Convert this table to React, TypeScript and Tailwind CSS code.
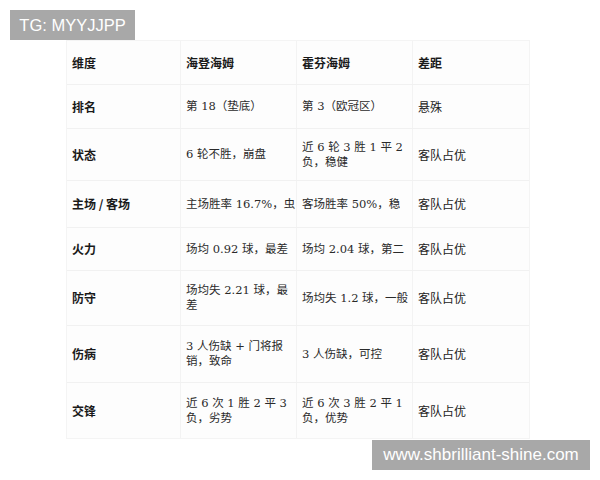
import React, { FC } from 'react';

type Row = { label: string; a: string[]; b: string[]; diff: string; h: string };

const rows: Row[] = [
    { label: '排名', a: ['第 18（垫底）'], b: ['第 3（欧冠区）'], diff: '悬殊', h: 'h-[44px]' },
    { label: '状态', a: ['6 轮不胜，崩盘'], b: ['近 6 轮 3 胜 1 平 2', '负，稳健'], diff: '客队占优', h: 'h-[52px]' },
    { label: '主场 / 客场', a: ['主场胜率 16.7%，虫'], b: ['客场胜率 50%，稳'], diff: '客队占优', h: 'h-[47px]' },
    { label: '火力', a: ['场均 0.92 球，最差'], b: ['场均 2.04 球，第二'], diff: '客队占优', h: 'h-[43px]' },
    { label: '防守', a: ['场均失 2.21 球，最', '差'], b: ['场均失 1.2 球，一般'], diff: '客队占优', h: 'h-[55px]' },
    { label: '伤病', a: ['3 人伤缺 + 门将报', '销，致命'], b: ['3 人伤缺，可控'], diff: '客队占优', h: 'h-[57px]' },
    { label: '交锋', a: ['近 6 次 1 胜 2 平 3', '负，劣势'], b: ['近 6 次 3 胜 2 平 1', '负，优势'], diff: '客队占优', h: 'h-[55px]' },
];

const Lines: FC<{ lines: string[] }> = ({ lines }) => (
    <div className="leading-[15px] whitespace-nowrap overflow-hidden text-[11.5px] text-[#2a2a2a]" style={{ fontFamily: '"DejaVu Serif", "Noto Sans CJK SC", serif' }}>
        {lines.map((l, i) => <div key={i}>{l}</div>)}
    </div>
);

export default function App() {
    const cell = "flex items-center pl-[5px] border-r border-[#f3f3f3] overflow-hidden";
    const sans = { fontFamily: '"Noto Sans CJK SC", sans-serif' };
    return (
        <div className="relative w-[600px] h-[480px] bg-white overflow-hidden" style={sans}>
            <div className="pt-[40px] pl-[66px]">
                <div className="w-[464px] bg-[#fdfdfd] border border-[#f4f4f4] text-[12px]">
                    <div className="grid grid-cols-[114px_116px_116px_118px] h-[44px] border-b border-[#f1f1f1] font-bold text-[#1a1a1a]">
                        <div className={cell}>维度</div>
                        <div className={cell}>海登海姆</div>
                        <div className={cell}>霍芬海姆</div>
                        <div className={cell + " border-r-0"}>差距</div>
                    </div>
                    {rows.map((r, i) => (
                        <div key={r.label} className={`grid grid-cols-[114px_116px_116px_118px] ${r.h} ${i < rows.length - 1 ? 'border-b border-[#f1f1f1]' : ''}`}>
                            <div className={cell + " font-bold text-[#1a1a1a]"}>{r.label}</div>
                            <div className={cell}><Lines lines={r.a} /></div>
                            <div className={cell}><Lines lines={r.b} /></div>
                            <div className={cell + " border-r-0 text-[#222]"}>{r.diff}</div>
                        </div>
                    ))}
                </div>
            </div>
            <div className="absolute left-[10px] top-[10px] w-[125px] h-[30px] bg-[#a8a8a8] text-white text-[16.5px] flex items-center justify-center" style={{ fontFamily: '"Liberation Sans", sans-serif' }}>
                TG: MYYJJPP
            </div>
            <div className="absolute left-[372px] top-[440px] w-[218px] h-[30px] bg-[#a8a8a8] text-white text-[17px] flex items-center justify-center" style={{ fontFamily: '"Liberation Sans", sans-serif' }}>
                www.shbrilliant-shine.com
            </div>
        </div>
    );
}
